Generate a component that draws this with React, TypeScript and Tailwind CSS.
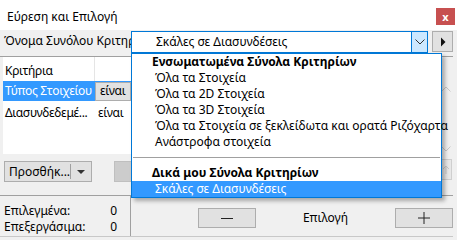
import React from "react";

const font = { fontFamily: '"Noto Sans", "Open Sans", sans-serif' };

function ChevronDown({ className = "" }: { className?: string }) {
  return (
    <svg width="10" height="6" viewBox="0 0 10 6" className={className}>
      <path d="M0.5 0.5 L5 5 L9.5 0.5" fill="none" stroke="currentColor" strokeWidth="1" />
    </svg>
  );
}

export default function App() {
  return (
    <div
      className="relative w-[457px] h-[240px] overflow-hidden bg-[#f0f0f0] text-[12px] leading-[16px] text-black"
      style={font}
    >
      {/* Title bar */}
      <div className="h-[30px] bg-white flex items-start justify-between">
        <div className="pl-[7px] pt-[9px]">Εύρεση και Επιλογή</div>
        <div className="mt-[8px] mr-[2px] w-[19px] h-[17px] bg-[#c75050] flex items-center justify-center text-white text-[11px] font-bold leading-none">
          x
        </div>
      </div>

      {/* Criteria set row */}
      <div className="h-[27px] mr-[4px] border-b border-[#a0a0a0] flex items-start">
        <div className="w-[131px] pl-[4px] pt-[3px] whitespace-nowrap overflow-hidden">Όνομα Συνόλου Κριτηρί</div>
        <div className="mt-[1px] w-[297px] h-[22px] border border-[#0078d7] bg-white flex items-center">
          <div className="flex-1 pl-[24px]">Σκάλες σε Διασυνδέσεις</div>
          <div className="w-[16px] h-[20px] bg-[#cce8ff] border-l border-[#0078d7] flex items-center justify-center text-[#333]">
            <ChevronDown />
          </div>
        </div>
        <div className="ml-[4px] mt-[1px] w-[21px] h-[21px] bg-[#e1e1e1] border border-[#adadad] flex items-center justify-center">
          <svg width="6" height="10" viewBox="0 0 6 10">
            <path d="M1 0.5 L5.5 5 L1 9.5 Z" fill="#111" />
          </svg>
        </div>
      </div>

      {/* Middle area */}
      <div className="h-[139px] mr-[4px] border-b border-[#a0a0a0] flex">
        <div className="w-[131px] flex flex-col">
          <div className="ml-[3px] h-[97px] bg-white flex flex-col tracking-[-0.3px]">
            <div className="h-[24px] flex items-stretch">
              <div className="w-[92px] pl-[2px] pt-[6px] border-r border-[#e5e5e5]">Κριτήρια</div>
            </div>
            <div className="h-[20px] bg-[#3399ff] flex items-center">
              <div className="w-[92px] pl-[2px] text-white whitespace-nowrap">Τύπος Στοιχείου</div>
              <div className="flex-1 h-[19px] bg-[#e1e1e1] border border-[#adadad] pl-[4px] flex items-center">είναι</div>
            </div>
            <div className="h-[24px] flex items-center">
              <div className="w-[92px] pl-[2px] whitespace-nowrap">Διασυνδεδεμέ...</div>
              <div className="pl-[3px]">είναι</div>
            </div>
          </div>
          <div className="mt-[7px] ml-[4px] flex">
            <div className="w-[88px] h-[21px] bg-[#e1e1e1] border border-[#adadad] flex items-center">
              <div className="pl-[4px] w-[65px] whitespace-nowrap">Προσθήκ...</div>
              <div className="w-px h-[15px] bg-[#a0a0a0]" />
              <div className="flex-1 flex justify-center">
                <svg width="8" height="4" viewBox="0 0 8 4">
                  <path d="M0 0 L8 0 L4 4 Z" fill="#333" />
                </svg>
              </div>
            </div>
          </div>
        </div>
        <div className="flex-1 flex">
          <div className="flex-1 pt-[104px]">
            <div className="ml-[-17px] w-[100px] h-[21px] bg-[#cccccc] border border-[#bfbfbf]" />
          </div>
          <div className="w-[14px] flex flex-col items-center text-[#c8c8c8]">
            <div className="mt-[29px] rotate-180"><ChevronDown /></div>
            <div className="mt-[54px]"><ChevronDown /></div>
            <div className="mt-[7px] w-[11px] h-[21px] bg-[#e8e8e8] border border-[#cfcfcf] flex items-center justify-center">
              <svg width="8" height="10" viewBox="0 0 8 10">
                <path d="M4 9 L4 1 M1 4 L4 1 L7 4" fill="none" stroke="#c8c8c8" strokeWidth="1" />
              </svg>
            </div>
          </div>
        </div>
      </div>

      {/* Bottom area */}
      <div className="h-[41px] mr-[4px] border-b border-[#c8c8c8] flex">
        <div className="w-[131px] border-r border-[#a0a0a0] pt-[7px] pl-[4px] flex flex-col">
          <div className="flex justify-between pr-[13px]"><span>Επιλεγμένα:</span><span>0</span></div>
          <div className="flex justify-between pr-[13px]"><span>Επεξεργάσιμα:</span><span>0</span></div>
        </div>
        <div className="flex-1 flex items-start pt-[12px] pl-[67px]">
          <div className="w-[58px] h-[20px] bg-[#e1e1e1] border border-[#adadad] flex items-center justify-center">
            <div className="w-[12px] h-px bg-[#222]" />
          </div>
          <div className="flex-1 h-[20px] flex items-center justify-center">Επιλογή</div>
          <div className="w-[58px] h-[20px] bg-[#e1e1e1] border border-[#adadad] flex items-center justify-center">
            <svg width="12" height="12" viewBox="0 0 12 12">
              <path d="M6 0 L6 12 M0 6 L12 6" stroke="#222" strokeWidth="1" />
            </svg>
          </div>
        </div>
      </div>

      {/* Dropdown popup */}
      <div className="absolute left-[131px] top-[53px] w-[311px] h-[145px] bg-white border border-[#0078d7] shadow-[3px_3px_4px_rgba(0,0,0,0.3)] flex flex-col">
        <div className="h-[16px] pl-[20px] font-bold whitespace-nowrap">Ενσωματωμένα Σύνολα Κριτηρίων</div>
        <div className="h-[16px] pl-[23px] whitespace-nowrap">Όλα τα Στοιχεία</div>
        <div className="h-[16px] pl-[23px] whitespace-nowrap">Όλα τα 2D Στοιχεία</div>
        <div className="h-[16px] pl-[23px] whitespace-nowrap">Όλα τα 3D Στοιχεία</div>
        <div className="h-[16px] pl-[23px] whitespace-nowrap">Όλα τα Στοιχεία σε ξεκλείδωτα και ορατά Ριζόχαρτα</div>
        <div className="h-[16px] pl-[23px] whitespace-nowrap">Ανάστροφα στοιχεία</div>
        <div className="h-[15px] flex items-center px-[1px]">
          <div className="flex-1 h-px bg-[#a0a0a0]" />
        </div>
        <div className="h-[16px] pl-[20px] font-bold whitespace-nowrap">Δικά μου Σύνολα Κριτηρίων</div>
        <div className="h-[16px] pl-[23px] bg-[#3399ff] text-white whitespace-nowrap">Σκάλες σε Διασυνδέσεις</div>
      </div>
    </div>
  );
}
